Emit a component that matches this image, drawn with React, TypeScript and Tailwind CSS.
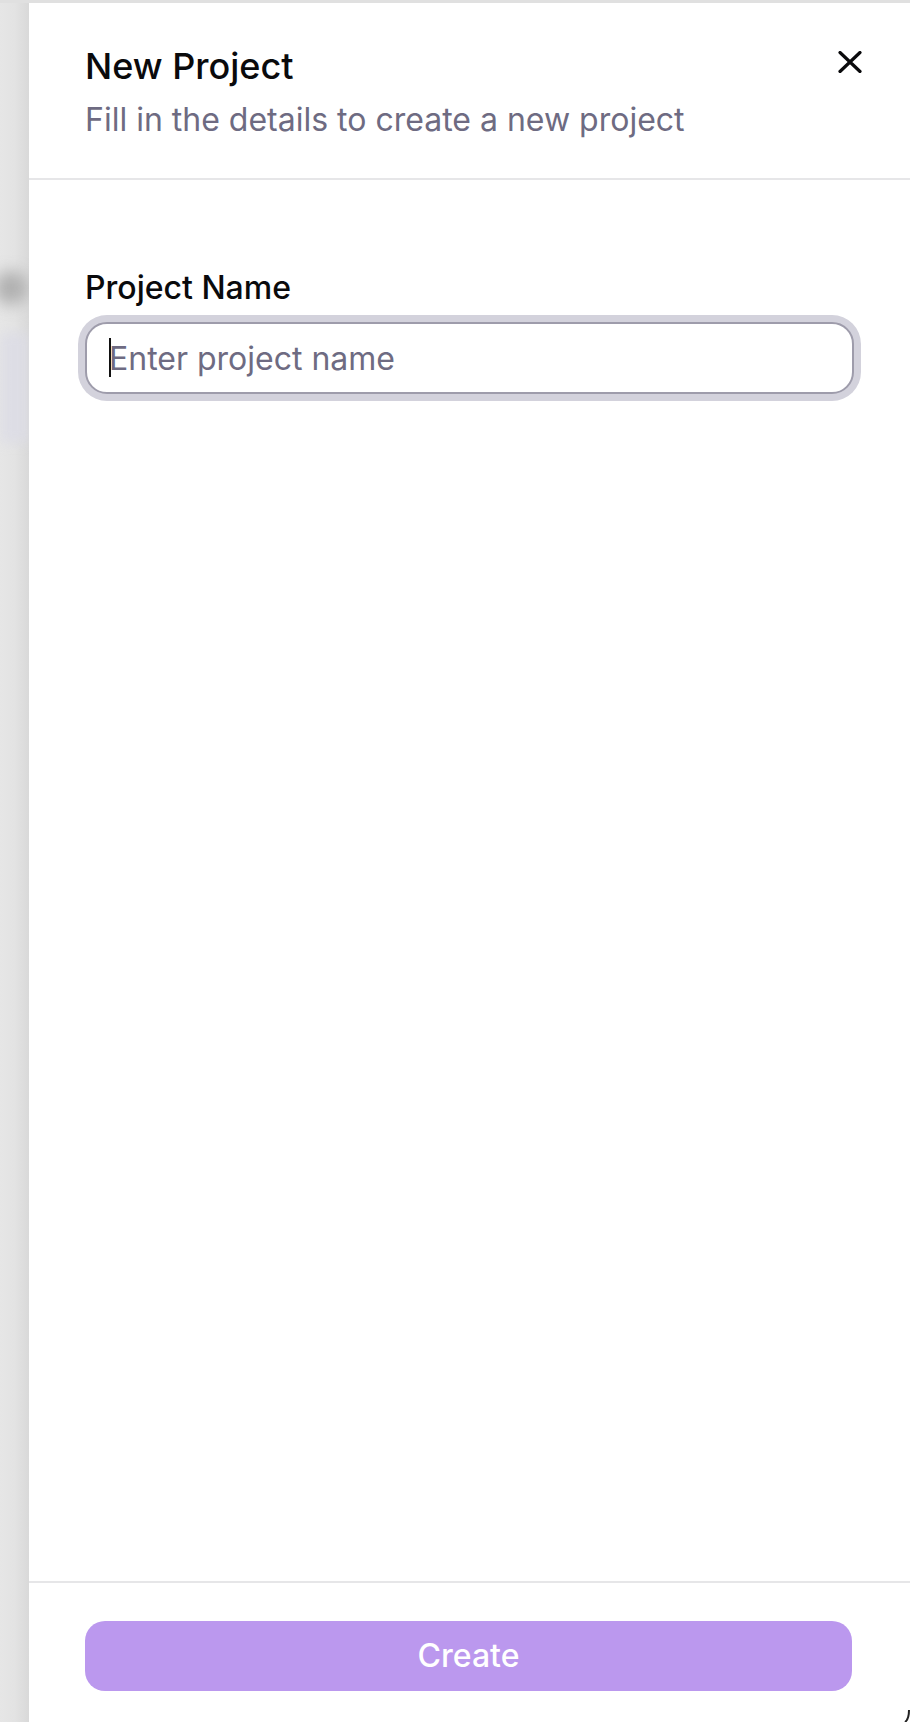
import React from "react";

export default function App() {
  return (
    <div
      className="relative flex h-[1722px] w-[910px] overflow-hidden border-t-[3px] border-[#e0e0e0] bg-white"
      style={{ fontFamily: "Inter, 'Noto Sans', sans-serif" }}
    >
      {/* left backdrop strip */}
      <div className="relative h-full w-[29px] shrink-0 overflow-hidden bg-gradient-to-r from-[#e6e6e6] via-[#e3e3e3] to-[#d9d9d9]">
        <div className="absolute left-[-6px] top-[268px] h-[34px] w-[34px] rounded-full bg-[#9a9a9a] opacity-70 blur-[8px]" />
        <div className="absolute left-0 top-[330px] h-[110px] w-[29px] bg-[#dcdce6] opacity-80 blur-[6px]" />
      </div>

      {/* panel */}
      <div className="flex h-full flex-1 flex-col bg-white">
        {/* header */}
        <div className="relative border-b-2 border-[#e6e6e8] pb-[38px] pl-[56px] pr-[56px] pt-[41px]">
          <h2 className="text-[36px] font-medium leading-[44px] text-[#0a0a0c]">New Project</h2>
          <p className="mt-[12px] text-[32px] leading-[40px] text-[#6e6b82]">
            Fill in the details to create a new project
          </p>
          <button className="absolute right-[48px] top-[48px] flex h-[22px] w-[24px] items-center justify-center text-[#0a0a0c]">
            <svg width="24" height="22" viewBox="0 0 24 22" fill="none">
              <path d="M2 1.5L22 20.5M22 1.5L2 20.5" stroke="currentColor" strokeWidth="3.2" strokeLinecap="round" />
            </svg>
          </button>
        </div>

        {/* body */}
        <div className="flex-1 px-[56px] pt-[88px]">
          <label className="block text-[32px] font-medium leading-[40px] text-[#0a0a0c]">Project Name</label>
          <div className="relative mt-[14px]">
            <input
              type="text"
              placeholder="Enter project name"
              className="h-[72px] w-[769px] rounded-[22px] border-2 border-[#9e9cab] bg-white pl-[22px] text-[32px] text-[#0a0a0c] caret-transparent shadow-[0_0_0_7px_#d3d2dc] outline-none placeholder:text-[#6e6b82]"
              style={{ fontFamily: "Inter, 'Noto Sans', sans-serif" }}
            />
            <span className="pointer-events-none absolute left-[24px] top-[16px] h-[39px] w-[2px] bg-[#111]" />
          </div>
        </div>

        {/* footer */}
        <div className="border-t-2 border-[#e6e6e8] px-[56px] pb-[31px] pt-[38px]">
          <button className="flex h-[70px] w-[767px] items-center justify-center rounded-[20px] bg-[#bb98ee] text-[32px] font-medium text-white">
            Create
          </button>
        </div>
      </div>

      <svg className="absolute bottom-0 right-0" width="6" height="12" viewBox="0 0 6 12" fill="none">
        <path d="M5 0 C5 6 4 10 1 12" stroke="#222" strokeWidth="2" />
      </svg>
    </div>
  );
}
